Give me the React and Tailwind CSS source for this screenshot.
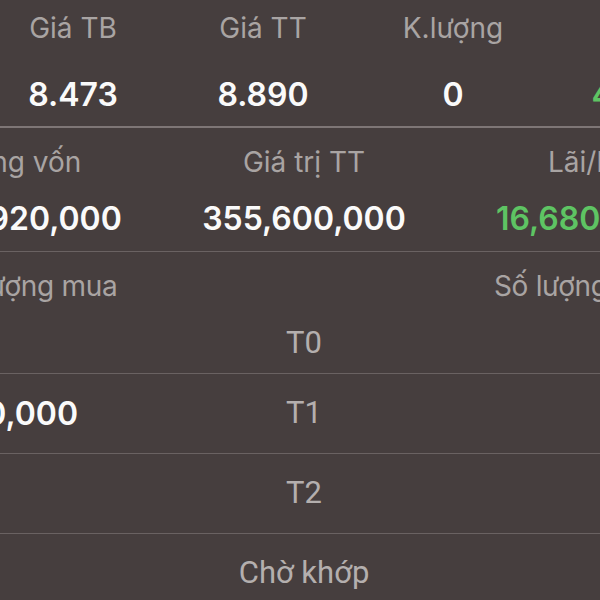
import React from 'react';

// Portfolio detail slice: summary columns, then the T0/T1/T2 settlement table.
const TOP = [
  { label: 'Giá TB', value: '8.473' },
  { label: 'Giá TT', value: '8.890' },
  { label: 'K.lượng', value: '0' },
  { label: '% Lãi', value: '4.93%', green: true },
];

const MID = [
  { label: 'Tổng vốn', value: '338,920,000' },
  { label: 'Giá trị TT', value: '355,600,000' },
  { label: 'Lãi/lỗ', value: '16,680,000', green: true },
];

const ROWS = [
  { left: '40,000', status: 'T1', right: '' },
  { left: '', status: 'T2', right: '' },
  { left: '', status: 'Chờ khớp', right: '' },
];

const sans = { fontFamily: 'Inter, "Noto Sans", sans-serif' };
const roboto = { fontFamily: 'Roboto, "Noto Sans", sans-serif' };

export default function App() {
  return (
    <div className="w-[600px] h-[600px] overflow-hidden bg-[#463e3e]" style={sans}>
      {/* top summary */}
      <div className="h-[128px] border-b-2 border-[#7e7676]">
        <div className="ml-[-22px] w-[760px] grid grid-cols-4">
          {TOP.map((c) => (
            <div key={c.label} className="flex flex-col items-center">
              <div className="h-[56px] flex items-center text-[28px] text-[#a9a4a3] whitespace-nowrap">{c.label}</div>
              <div className={`mt-[14px] h-[50px] flex items-center text-[32px] font-semibold whitespace-nowrap ${c.green ? 'text-[#5ec463]' : 'text-[#fafafa]'}`}>
                {c.value}
              </div>
            </div>
          ))}
        </div>
      </div>

      {/* capital / market value / profit */}
      <div className="h-[124px] border-b border-[#6a6262] pt-[10px]">
        <div className="ml-[-119px] w-[846px] grid grid-cols-3">
          {MID.map((c, i) => (
            <div key={c.label} className={`flex flex-col items-center ${i === 0 ? 'pr-[4px]' : ''} ${i === 2 ? 'pr-[4px]' : ''}`}>
              <div className="h-[48px] flex items-center text-[28px] text-[#a9a4a3] whitespace-nowrap">{c.label}</div>
              <div className={`mt-[9px] h-[48px] flex items-center text-[32px] font-semibold whitespace-nowrap ${c.green ? 'text-[#5ec463]' : 'text-[#fafafa]'}`}>
                {c.value}
              </div>
            </div>
          ))}
        </div>
      </div>

      {/* settlement table */}
      <div className="ml-[-119px] w-[846px]">
        <div className="grid grid-cols-3 h-[68px] items-center text-[28px] text-[#a9a4a3]">
          <div className="text-center whitespace-nowrap tracking-[-0.3px] pr-[10px]">Khối lượng mua</div>
          <div />
          <div className="text-center whitespace-nowrap tracking-[-0.3px] pr-[14px]">Số lượng bán</div>
        </div>
        <div className="grid grid-cols-3 h-[53px] pb-[8px] items-center">
          <div />
          <div className="text-center text-[31px] text-[#b4afae]" style={roboto}>T0</div>
          <div />
        </div>
        {ROWS.map((r) => (
          <div key={r.status} className="grid grid-cols-3 h-[80px] border-t border-[#6a6262] items-center">
            <div className="text-center text-[32px] font-semibold text-[#fafafa] whitespace-nowrap pr-[2px]">{r.left}</div>
            <div className="text-center text-[31px] text-[#b4afae] whitespace-nowrap" style={roboto}>{r.status}</div>
            <div className="text-center text-[32px] font-semibold text-[#fafafa] whitespace-nowrap">{r.right}</div>
          </div>
        ))}
      </div>
    </div>
  );
}
